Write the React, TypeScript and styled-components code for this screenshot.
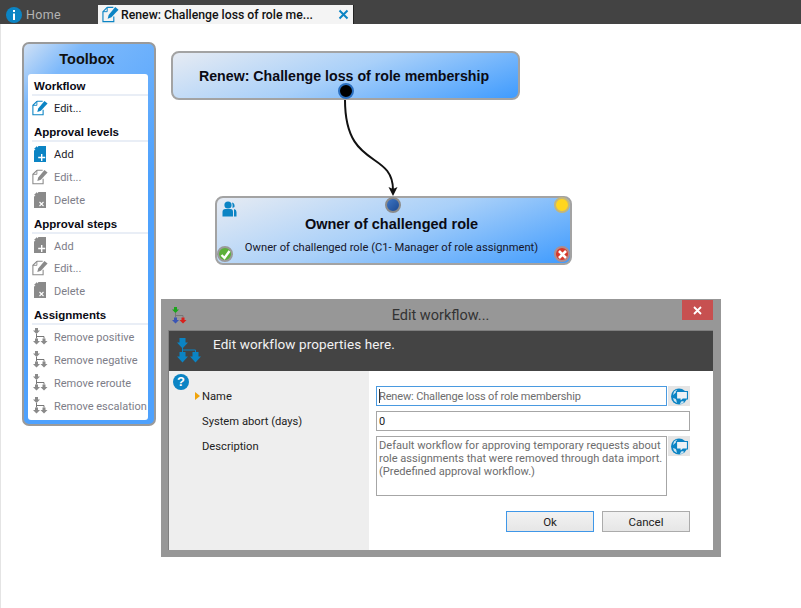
import React from "react";
import styled, { createGlobalStyle } from "styled-components";

const UI_FONT = `Roboto, "Noto Sans", sans-serif`;
const HEAD_FONT = `"Liberation Sans", Arial, sans-serif`;
const BLUE = "#0b84c4";
const GREY = "#8a8a8a";

const Global = createGlobalStyle`
  html, body { margin: 0; padding: 0; background: #fff; }
  body { font-family: ${UI_FONT}; width: 801px; height: 608px; overflow: hidden; }
`;

const Page = styled.div`
  width: 801px;
  height: 608px;
  display: flex;
  flex-direction: column;
`;

const TabBar = styled.div`
  height: 24px;
  flex: none;
  background: #434343;
  display: flex;
  align-items: flex-end;
  padding-left: 6px;
`;

const HomeTab = styled.div`
  width: 92px;
  height: 19px;
  display: flex;
  align-items: center;
  gap: 4px;
  color: #b4b4b4;
  font-size: 12.5px;
  letter-spacing: 0.3px;
`;

const ActiveTab = styled.div`
  width: 256px;
  height: 19px;
  background: #f4f4f4;
  border-right: 1px solid #222;
  box-sizing: border-box;
  display: flex;
  align-items: center;
  padding: 0 4px;
  gap: 2px;
  font-size: 12.25px;
  font-weight: 500;
  color: #111;
`;

const TabTitle = styled.span`
  flex: 1;
  white-space: nowrap;
`;

const Canvas = styled.div`
  position: relative;
  flex: 1;
  border-left: 1px solid #e4e4e4;
`;

const Toolbox = styled.div`
  position: absolute;
  left: 21px;
  top: 18px;
  width: 134px;
  height: 384px;
  box-sizing: border-box;
  border: 2px solid #9a9a9a;
  border-radius: 7px;
  background: linear-gradient(135deg, #cfe0f5 0%, #7db9fb 12%, #4ea1fd 50%, #4ea1fd 100%);
  padding: 0 6px 4px 4px;
  display: flex;
  flex-direction: column;
`;

const ToolboxTitle = styled.div`
  height: 30px;
  flex: none;
  padding-right: 2px;
  display: flex;
  align-items: center;
  justify-content: center;
  font-family: ${HEAD_FONT};
  font-weight: 700;
  font-size: 14.5px;
  color: #101010;
`;

const ToolboxBody = styled.div`
  flex: 1;
  background: #fff;
  border-radius: 3px;
  padding: 1px 0 0 4px;
`;

const SectionTitle = styled.div`
  height: 21px;
  box-sizing: border-box;
  padding: 3px 0 0 2px;
  font-family: ${HEAD_FONT};
  font-weight: 700;
  font-size: 11.5px;
  line-height: 16px;
  color: #0a0a14;
  border-bottom: 2px solid #e9eef6;
`;

const ToolRow = styled.div<{ $off?: boolean }>`
  height: 23px;
  display: flex;
  align-items: center;
  gap: 6px;
  font-size: 11px;
  color: ${(p) => (p.$off ? "#7d7d88" : "#1c1c2a")};
  white-space: nowrap;
`;

const RowIcon = styled.span`
  width: 16px;
  height: 18px;
  flex: none;
  display: flex;
  align-items: center;
  justify-content: center;
`;

const RowLabel = styled.span`
  padding-top: 2px;
`;

const Section = styled.div`
  margin-bottom: 2px;
  &:nth-child(3) {
    margin-bottom: 2.5px;
  }
  &:nth-child(3) ${ToolRow} {
    height: 22.5px;
  }
`;

const Node = styled.div<{ $left: number; $top: number; $w: number; $h: number; $pr: number }>`
  position: absolute;
  left: ${(p) => p.$left}px;
  top: ${(p) => p.$top}px;
  width: ${(p) => p.$w}px;
  height: ${(p) => p.$h}px;
  box-sizing: border-box;
  border: 2px solid #a3a3a3;
  border-radius: 8px;
  padding-right: ${(p) => p.$pr}px;
  background: linear-gradient(160deg, #e6ebf3 0%, #a9d0f9 48%, #3f9bfe 100%);
  display: flex;
  flex-direction: column;
  align-items: center;
`;

const NodeTitle = styled.div<{ $pt: number; $size: number }>`
  padding-top: ${(p) => p.$pt}px;
  font-family: ${HEAD_FONT};
  font-weight: 700;
  font-size: ${(p) => p.$size}px;
  line-height: 18px;
  color: #0b0b14;
  white-space: nowrap;
`;

const NodeSub = styled.div`
  margin-top: 8px;
  font-size: 11.2px;
  line-height: 14px;
  color: #16162a;
  white-space: nowrap;
`;

const Port = styled.div<{ $x: number; $y: number; $c: string; $ring: string }>`
  position: absolute;
  left: ${(p) => p.$x}px;
  top: ${(p) => p.$y}px;
  width: 16px;
  height: 16px;
  box-sizing: border-box;
  border-radius: 50%;
  border: 2px solid ${(p) => p.$ring};
  background: ${(p) => p.$c};
  display: flex;
  align-items: center;
  justify-content: center;
`;

const NodeIcon = styled.div<{ $x: number; $y: number }>`
  position: absolute;
  left: ${(p) => p.$x}px;
  top: ${(p) => p.$y}px;
  display: flex;
`;

const Wire = styled.svg`
  position: absolute;
  left: 0;
  top: 0;
  pointer-events: none;
`;

const Dialog = styled.div`
  position: absolute;
  left: 160px;
  top: 275px;
  width: 560px;
  height: 258px;
  box-sizing: border-box;
  background: #979797;
  padding: 0 8px 7px 7px;
  display: flex;
  flex-direction: column;
`;

const DialogTitleBar = styled.div`
  height: 31px;
  flex: none;
  position: relative;
  display: flex;
  align-items: center;
  justify-content: center;
  padding-top: 2px;
  box-sizing: border-box;
  font-size: 14.5px;
  color: #333;
`;

const DialogLogo = styled.div`
  position: absolute;
  left: 3px;
  top: 8px;
  display: flex;
`;

const CloseBtn = styled.div`
  position: absolute;
  right: 0;
  top: 1px;
  width: 31px;
  height: 20px;
  background: #c75050;
  color: #fff;
  display: flex;
  align-items: center;
  justify-content: center;
`;

const DialogInner = styled.div`
  flex: 1;
  min-height: 0;
  display: flex;
  flex-direction: column;
  border-top: 1px solid #7f7f7f;
  border-left: 1px solid #7f7f7f;
`;

const DialogHeader = styled.div`
  height: 40px;
  flex: none;
  background: #444;
  color: #f2f2f2;
  font-size: 13.5px;
  display: flex;
  align-items: flex-start;
  gap: 11px;
  padding: 7px 0 0 8px;
  box-sizing: border-box;
  letter-spacing: 0.1px;
`;

const HeaderText = styled.span`
  line-height: 16px;
  margin-top: -2px;
`;

const DialogBody = styled.div`
  flex: 1;
  min-height: 0;
  display: flex;
`;

const LabelPane = styled.div`
  width: 200px;
  flex: none;
  background: #eee;
  position: relative;
  padding: 15px 0 0 33px;
  box-sizing: border-box;
`;

const HelpIcon = styled.div`
  position: absolute;
  left: 4px;
  top: 3px;
  width: 16px;
  height: 16px;
  border-radius: 50%;
  background: ${BLUE};
  color: #fff;
  font-family: ${HEAD_FONT};
  font-weight: 700;
  font-size: 13px;
  line-height: 16px;
  text-align: center;
`;

const FieldLabel = styled.div`
  height: 25px;
  font-size: 11.2px;
  line-height: 22px;
  color: #222;
  position: relative;
`;

const Marker = styled.div`
  position: absolute;
  left: -7px;
  top: 6px;
  width: 0;
  height: 0;
  border-left: 5px solid #f0a30a;
  border-top: 4px solid transparent;
  border-bottom: 4px solid transparent;
`;

const FormPane = styled.div`
  flex: 1;
  min-width: 0;
  background: #fff;
  padding: 15px 23px 0 7px;
  display: flex;
  flex-direction: column;
`;

const FieldRow = styled.div`
  display: flex;
  gap: 1px;
  margin-bottom: 5px;
`;

const Input = styled.div<{ $focus?: boolean; $muted?: boolean }>`
  flex: 1;
  min-width: 0;
  height: 20px;
  box-sizing: border-box;
  border: 1px solid ${(p) => (p.$focus ? "#4a9ae0" : "#a6a6a6")};
  padding: 1px 2px 0;
  font-size: 11px;
  letter-spacing: -0.15px;
  line-height: 18px;
  color: ${(p) => (p.$muted ? "#6d6d6d" : "#222")};
  white-space: nowrap;
  overflow: hidden;
  position: relative;
  ${(p) =>
    p.$focus &&
    `&::before {
      content: "";
      position: absolute;
      left: 2px;
      top: 2px;
      width: 1px;
      height: 14px;
      background: #333;
    }`}
`;

const TextArea = styled(Input)`
  height: 60px;
  padding: 2px 2px 0;
  line-height: 13px;
  letter-spacing: 0;
  font-size: 11.1px;
`;

const TranslateBtn = styled.div`
  width: 22px;
  height: 20px;
  flex: none;
  background: #e5e5e5;
  display: flex;
  align-items: center;
  justify-content: center;
`;

const ButtonRow = styled.div`
  display: flex;
  justify-content: flex-end;
  gap: 8px;
  margin-top: 10px;
`;

const Btn = styled.div<{ $primary?: boolean }>`
  width: 88px;
  height: 21px;
  box-sizing: border-box;
  border: 1px solid ${(p) => (p.$primary ? "#3f97e8" : "#ababab")};
  background: linear-gradient(#f2f2f2, #e6e6e6);
  font-size: 11.5px;
  line-height: 20px;
  text-align: center;
  color: #222;
`;

const InfoIcon = () => (
  <svg width="16" height="16" viewBox="0 0 16 16">
    <circle cx="8" cy="8" r="8" fill={BLUE} />
    <rect x="7" y="3" width="2" height="2" fill="#fff" />
    <rect x="7" y="6.5" width="2" height="6.5" fill="#fff" />
  </svg>
);

// page outline with pencil across it
const EditIcon = ({ c = BLUE, size = 18 }: { c?: string; size?: number }) => (
  <svg width={size} height={size} viewBox="0 0 18 18" fill="none">
    <path d="M5.5 1.5 H12 M5.5 1.5 L1 6 V16.5 H12.5 V11" stroke={c} strokeWidth="1.2" />
    <path d="M5.5 1.5 V6 H1" stroke={c} strokeWidth="1" />
    <path d="M6 13.5 L7 9.5 L14 1 L17.5 4 L10 12 Z" fill={c} />
  </svg>
);

const DocIcon = ({ c, mark }: { c: string; mark: "plus" | "x" }) => (
  <svg width="16" height="18" viewBox="0 0 16 18">
    <path d="M6.5 1 H14 V17 H2 V5.5 Z" fill={c} />
    <path d="M2 4 L5 1 V4 Z" fill={c} />
    {mark === "plus" ? (
      <path d="M6.2 12.5 H13.2 M9.7 9 V16" stroke="#fff" strokeWidth="1.4" />
    ) : (
      <path d="M7.5 11 L11.5 15 M11.5 11 L7.5 15" stroke="#fff" strokeWidth="1.1" />
    )}
  </svg>
);

const Arrow = ({ x, y, c }: { x: number; y: number; c: string }) => (
  <path d={`M${x - 1.5} ${y} h3 v2.5 h2 l-3.5 3.5 l-3.5 -3.5 h2 z`} fill={c} />
);

const TreeIcon = ({ a = GREY, b = GREY, d = GREY }: { a?: string; b?: string; d?: string }) => (
  <svg width="16" height="17" viewBox="0 0 16 17" fill="none">
    <path d="M4.5 6 V10.5 M4.5 8.5 H12 V10.5" stroke="#777" strokeWidth="1" />
    <Arrow x={4.5} y={0} c={a} />
    <Arrow x={4.5} y={10.5} c={b} />
    <Arrow x={12} y={10.5} c={d} />
  </svg>
);

const FLOW_ARROW = "M2.5 0 h6 v4.5 h2.5 l-5.5 6 l-5.5 -6 h2.5 z";

const FlowIcon = () => (
  <svg width="25" height="25" viewBox="0 0 25 25" fill="none">
    <path d="M5.5 10 V14 M5.5 12 H18.5 V14" stroke={BLUE} strokeWidth="1" />
    <path d={FLOW_ARROW} fill={BLUE} />
    <path d={FLOW_ARROW} fill={BLUE} transform="translate(0 14)" />
    <path d={FLOW_ARROW} fill={BLUE} transform="translate(13 14)" />
  </svg>
);

const GlobeIcon = () => (
  <svg width="17" height="17" viewBox="0 0 17 17">
    <circle cx="8" cy="8.5" r="8" fill={BLUE} />
    <path d="M3 3.5 L6 1.5 L5 4.5 L2 7 Z M2 10 L5 11 L6 15 L3 13 Z M9 16 L10 13 L13 13.5 L12 15.5 Z" fill="#cfe6f3" />
    <path d="M5.5 3.5 H16.5 V11 H12 L9 14 V11 H5.5 Z" fill="#eef2f5" stroke={BLUE} strokeWidth="1.2" />
  </svg>
);

const UsersIcon = () => (
  <svg width="15" height="16" viewBox="0 0 15 16">
    <circle cx="6" cy="4" r="3.6" fill={BLUE} />
    <path d="M0.5 15.5 V11 Q0.5 8 3.5 8 H8.5 Q11 8 11 11 V15.5 Z" fill={BLUE} />
    <path d="M10 1.5 Q13 2 12.5 6 L10.5 7 Q11 4 10 1.5 Z M12 8 Q14.5 8.5 14.5 11 V15.5 H12 Z" fill={BLUE} />
  </svg>
);

const CheckMark = () => (
  <svg width="11" height="11" viewBox="0 0 11 11" fill="none">
    <path d="M1.5 6 L4.5 9 L9.5 2" stroke="#fff" strokeWidth="2.4" />
  </svg>
);

const CrossMark = () => (
  <svg width="11" height="11" viewBox="0 0 11 11" fill="none">
    <path d="M2 2 L9 9 M9 2 L2 9" stroke="#fff" strokeWidth="2.6" />
  </svg>
);

const toolSections: { title: string; rows: { label: string; icon: React.ReactNode; off?: boolean }[] }[] = [
  { title: "Workflow", rows: [{ label: "Edit...", icon: <EditIcon /> }] },
  {
    title: "Approval levels",
    rows: [
      { label: "Add", icon: <DocIcon c={BLUE} mark="plus" /> },
      { label: "Edit...", icon: <EditIcon c={GREY} />, off: true },
      { label: "Delete", icon: <DocIcon c={GREY} mark="x" />, off: true },
    ],
  },
  {
    title: "Approval steps",
    rows: [
      { label: "Add", icon: <DocIcon c={GREY} mark="plus" />, off: true },
      { label: "Edit...", icon: <EditIcon c={GREY} />, off: true },
      { label: "Delete", icon: <DocIcon c={GREY} mark="x" />, off: true },
    ],
  },
  {
    title: "Assignments",
    rows: [
      { label: "Remove positive", icon: <TreeIcon />, off: true },
      { label: "Remove negative", icon: <TreeIcon />, off: true },
      { label: "Remove reroute", icon: <TreeIcon />, off: true },
      { label: "Remove escalation", icon: <TreeIcon />, off: true },
    ],
  },
];

export default function App() {
  return (
    <Page>
      <Global />
      <TabBar>
        <HomeTab>
          <InfoIcon />
          Home
        </HomeTab>
        <ActiveTab>
          <EditIcon size={17} />
          <TabTitle>Renew: Challenge loss of role me...</TabTitle>
          <svg width="11" height="11" viewBox="0 0 11 11" fill="none">
            <path d="M1.5 1.5 L9.5 9.5 M9.5 1.5 L1.5 9.5" stroke={BLUE} strokeWidth="2" />
          </svg>
        </ActiveTab>
      </TabBar>
      <Canvas>
        <Toolbox>
          <ToolboxTitle>Toolbox</ToolboxTitle>
          <ToolboxBody>
            {toolSections.map((s) => (
              <Section key={s.title}>
                <SectionTitle>{s.title}</SectionTitle>
                {s.rows.map((r) => (
                  <ToolRow key={r.label} $off={r.off}>
                    <RowIcon>{r.icon}</RowIcon>
                    <RowLabel>{r.label}</RowLabel>
                  </ToolRow>
                ))}
              </Section>
            ))}
          </ToolboxBody>
        </Toolbox>

        <Wire width="801" height="300">
          <path d="M344 76 C344 146, 392 126, 392 166" stroke="#111" strokeWidth="2" fill="none" />
          <path d="M387.5 163 L392 172 L396.5 163 L392 165 Z" fill="#111" />
        </Wire>

        <Node $left={170} $top={27} $w={349} $h={49} $pr={3}>
          <NodeTitle $pt={14} $size={14.2}>
            Renew: Challenge loss of role membership
          </NodeTitle>
          <Port $x={165} $y={30} $c="#000" $ring="#2a6fc0" />
        </Node>

        <Node $left={214} $top={172} $w={357} $h={69} $pr={4}>
          <Port $x={168} $y={-1} $c="linear-gradient(135deg,#3f76c4,#1c4a92)" $ring="#8b8b8b" />
          <NodeIcon $x={5} $y={3}>
            <UsersIcon />
          </NodeIcon>
          <NodeTitle $pt={17} $size={14.5}>
            Owner of challenged role
          </NodeTitle>
          <NodeSub>Owner of challenged role (C1- Manager of role assignment)</NodeSub>
          <Port $x={337} $y={-1} $c="#ffd61f" $ring="#c4b67a" />
          <Port $x={0} $y={48} $c="#5cb03a" $ring="#9a9a9a">
            <CheckMark />
          </Port>
          <Port $x={337} $y={48} $c="#d8392b" $ring="#b08d8d">
            <CrossMark />
          </Port>
        </Node>

        <Dialog>
          <DialogTitleBar>
            <DialogLogo>
              <TreeIcon a="#1aa51a" b="#3a55b5" d="#d8201c" />
            </DialogLogo>
            Edit workflow...
            <CloseBtn>
              <svg width="9" height="9" viewBox="0 0 9 9" fill="none">
                <path d="M1 1 L8 8 M8 1 L1 8" stroke="#fff" strokeWidth="1.8" />
              </svg>
            </CloseBtn>
          </DialogTitleBar>
          <DialogInner>
            <DialogHeader>
              <FlowIcon />
              <HeaderText>Edit workflow properties here.</HeaderText>
            </DialogHeader>
            <DialogBody>
              <LabelPane>
                <HelpIcon>?</HelpIcon>
                <FieldLabel>
                  <Marker />
                  Name
                </FieldLabel>
                <FieldLabel>System abort (days)</FieldLabel>
                <FieldLabel>Description</FieldLabel>
              </LabelPane>
              <FormPane>
                <FieldRow>
                  <Input $focus $muted>
                    Renew: Challenge loss of role membership
                  </Input>
                  <TranslateBtn>
                    <GlobeIcon />
                  </TranslateBtn>
                </FieldRow>
                <FieldRow>
                  <Input>0</Input>
                </FieldRow>
                <FieldRow>
                  <TextArea $muted>
                    Default workflow for approving temporary requests about
                    <br />
                    role assignments that were removed through data import.
                    <br />
                    (Predefined approval workflow.)
                  </TextArea>
                  <TranslateBtn>
                    <GlobeIcon />
                  </TranslateBtn>
                </FieldRow>
                <ButtonRow>
                  <Btn $primary>Ok</Btn>
                  <Btn>Cancel</Btn>
                </ButtonRow>
              </FormPane>
            </DialogBody>
          </DialogInner>
        </Dialog>
      </Canvas>
    </Page>
  );
}
